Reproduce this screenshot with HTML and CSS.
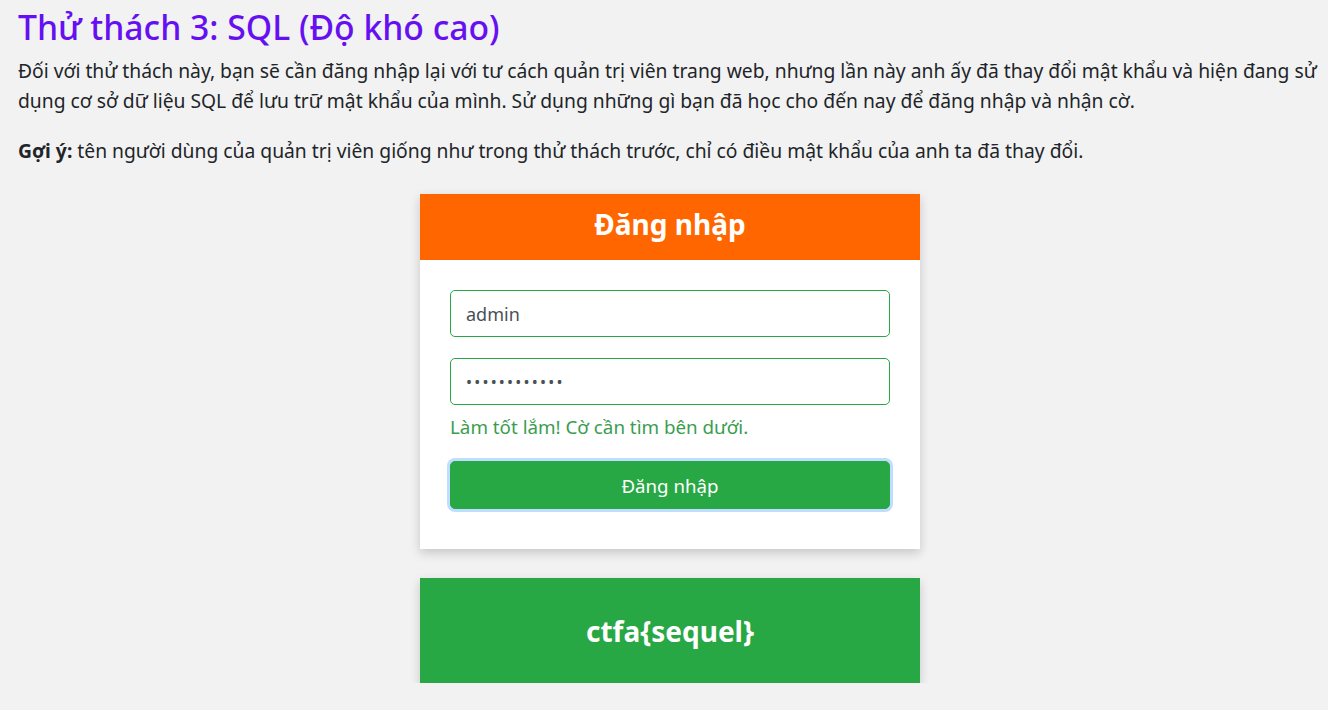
FILE: index.html
```html
<!DOCTYPE html>
<html lang="vi">
<head>
<meta charset="utf-8">
<title>Thử thách 3</title>
<link rel="stylesheet" href="styles.css">
</head>
<body>
<main class="page">
  <h1 class="title">Thử thách 3: SQL (Độ khó cao)</h1>
  <p class="text">Đối với thử thách này, bạn sẽ cần đăng nhập lại với tư cách quản trị viên trang web, nhưng lần này anh ấy đã thay đổi mật khẩu và hiện đang sử dụng cơ sở dữ liệu SQL để lưu trữ mật khẩu của mình. Sử dụng những gì bạn đã học cho đến nay để đăng nhập và nhận cờ.</p>
  <p class="text"><strong>Gợi ý:</strong> tên người dùng của quản trị viên giống như trong thử thách trước, chỉ có điều mật khẩu của anh ta đã thay đổi.</p>

  <div class="center">
    <section class="card">
      <header class="card-head">Đăng nhập</header>
      <form class="card-body">
        <input class="field" type="text" value="admin">
        <input class="field field-pass" type="password" value="abcdefghijkl">
        <div class="ok">Làm tốt lắm! Cờ cần tìm bên dưới.</div>
        <button class="btn" type="button">Đăng nhập</button>
      </form>
    </section>
    <section class="flag">ctfa{sequel}</section>
  </div>
</main>
</body>
</html>
```

FILE: styles.css
```css
* { box-sizing: border-box; }
html, body { margin: 0; padding: 0; }
body {
  background: #f2f2f2;
  color: #212529;
  font-family: "Noto Sans", "Open Sans", sans-serif;
  font-size: 19.3px;
  line-height: 30px;
}
.page {
  padding: 6px 6px 0 18px;
}
.title {
  margin: 0 0 8px 0;
  font-size: 33.7px;
  line-height: 42px;
  font-weight: 500;
  color: #6610f2;
}
.text {
  margin: 0 0 20px 0;
}
.text strong { font-weight: 700; }
.center {
  display: flex;
  flex-direction: column;
  align-items: center;
  padding-left: 0;
  padding-top: 8px;
}
.card {
  width: 500px;
  background: #fff;
  box-shadow: 0 4px 10px rgba(0,0,0,0.18);
}
.card-head {
  height: 66px;
  padding-bottom: 6px;
  background: #ff6600;
  color: #fff;
  font-size: 28px;
  font-weight: 700;
  display: flex;
  align-items: center;
  justify-content: center;
}
.card-body {
  padding: 30px 30px 40px 30px;
  display: flex;
  flex-direction: column;
}
.field {
  height: 47px;
  border: 1px solid #28a745;
  border-radius: 5px;
  padding: 0 15px;
  font-family: inherit;
  font-size: 18px;
  color: #495057;
  background: #fff;
  outline: none;
}
.field-pass {
  margin-top: 21px;
  font-size: 16px;
  letter-spacing: 2.2px;
}
.ok {
  color: #3a9d4f;
  font-size: 18.8px;
  margin-top: 7px;
  line-height: 30px;
}
.btn {
  margin-top: 19px;
  height: 48px;
  border: 1px solid #28a745;
  border-radius: 5px;
  background: #28a745;
  color: #fff;
  font-family: inherit;
  font-size: 18.7px;
  box-shadow: 0 0 0 3px rgba(0,123,255,0.25);
}
.flag {
  width: 500px;
  height: 105px;
  margin-top: 29px;
  background: #28a745;
  color: #fff;
  font-size: 28px;
  font-weight: 700;
  display: flex;
  align-items: center;
  justify-content: center;
  box-shadow: 0 4px 10px rgba(0,0,0,0.18);
}
```
